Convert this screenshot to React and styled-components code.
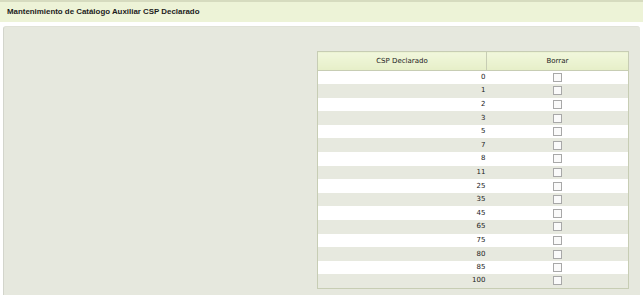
import React from 'react';
import styled, { createGlobalStyle } from 'styled-components';

const GlobalStyle = createGlobalStyle`
  html, body {
    margin: 0;
    padding: 0;
    background: #ffffff;
    font-family: Tahoma, "DejaVu Sans", sans-serif;
  }
`;

const Page = styled.div`
  width: 643px;
  height: 295px;
  overflow: hidden;
  display: flex;
  flex-direction: column;
`;

const TitleBar = styled.div`
  height: 19px;
  background: #edf3d7;
  border-top: 2px solid #d6dbbf;
  display: flex;
  align-items: center;
  padding: 0 0 1px 7px;
  font-family: "Liberation Sans", Arial, sans-serif;
  font-size: 7.9px;
  font-weight: bold;
  color: #1c1c1c;
`;

const Panel = styled.div`
  flex: 1;
  margin: 4px 3px 0 3px;
  background: #e6e8de;
  border-left: 1px solid #d3d5cc;
  border-top: 1px solid #e0e2d8;
  border-radius: 3px 3px 0 0;
  display: flex;
  justify-content: flex-end;
  padding: 24px 11px 0 0;
`;

const Grid = styled.table`
  width: 312px;
  border-collapse: collapse;
  border: 1px solid #c7cdb4;
  background: #ffffff;
  font-size: 7px;
  color: #222;
  align-self: flex-start;
`;

const HeadCell = styled.th`
  height: 18px;
  padding: 0;
  font-weight: normal;
  background: linear-gradient(#f1f7dc, #e6efc8);
  border-right: 1px solid #c7cdb4;
  border-bottom: 1px solid #c7cdb4;
  width: ${p => p.$w}px;
  &:last-child { border-right: none; }
`;

const Row = styled.tr`
  height: 13.6px;
  background: ${p => (p.$odd ? '#e7e9df' : '#ffffff')};
`;

const NumCell = styled.td`
  padding: 0 1px 0 0;
  text-align: right;
  line-height: 1;
`;

const BoxCell = styled.td`
  padding: 0;
  text-align: center;
  line-height: 1;
`;

const Check = styled.span`
  display: inline-block;
  width: 7px;
  height: 7px;
  border: 1px solid #a8a8a8;
  background: #fafafa;
  vertical-align: middle;
`;

const values = [0, 1, 2, 3, 5, 7, 8, 11, 25, 35, 45, 65, 75, 80, 85, 100];

export default function App() {
  return (
    <Page>
      <GlobalStyle />
      <TitleBar>Mantenimiento de Catálogo Auxiliar CSP Declarado</TitleBar>
      <Panel>
        <Grid>
          <thead>
            <tr>
              <HeadCell $w={169}>CSP Declarado</HeadCell>
              <HeadCell $w={142}>Borrar</HeadCell>
            </tr>
          </thead>
          <tbody>
            {values.map((v, i) => (
              <Row key={v} $odd={i % 2 === 1}>
                <NumCell>{v}</NumCell>
                <BoxCell><Check /></BoxCell>
              </Row>
            ))}
          </tbody>
        </Grid>
      </Panel>
    </Page>
  );
}
